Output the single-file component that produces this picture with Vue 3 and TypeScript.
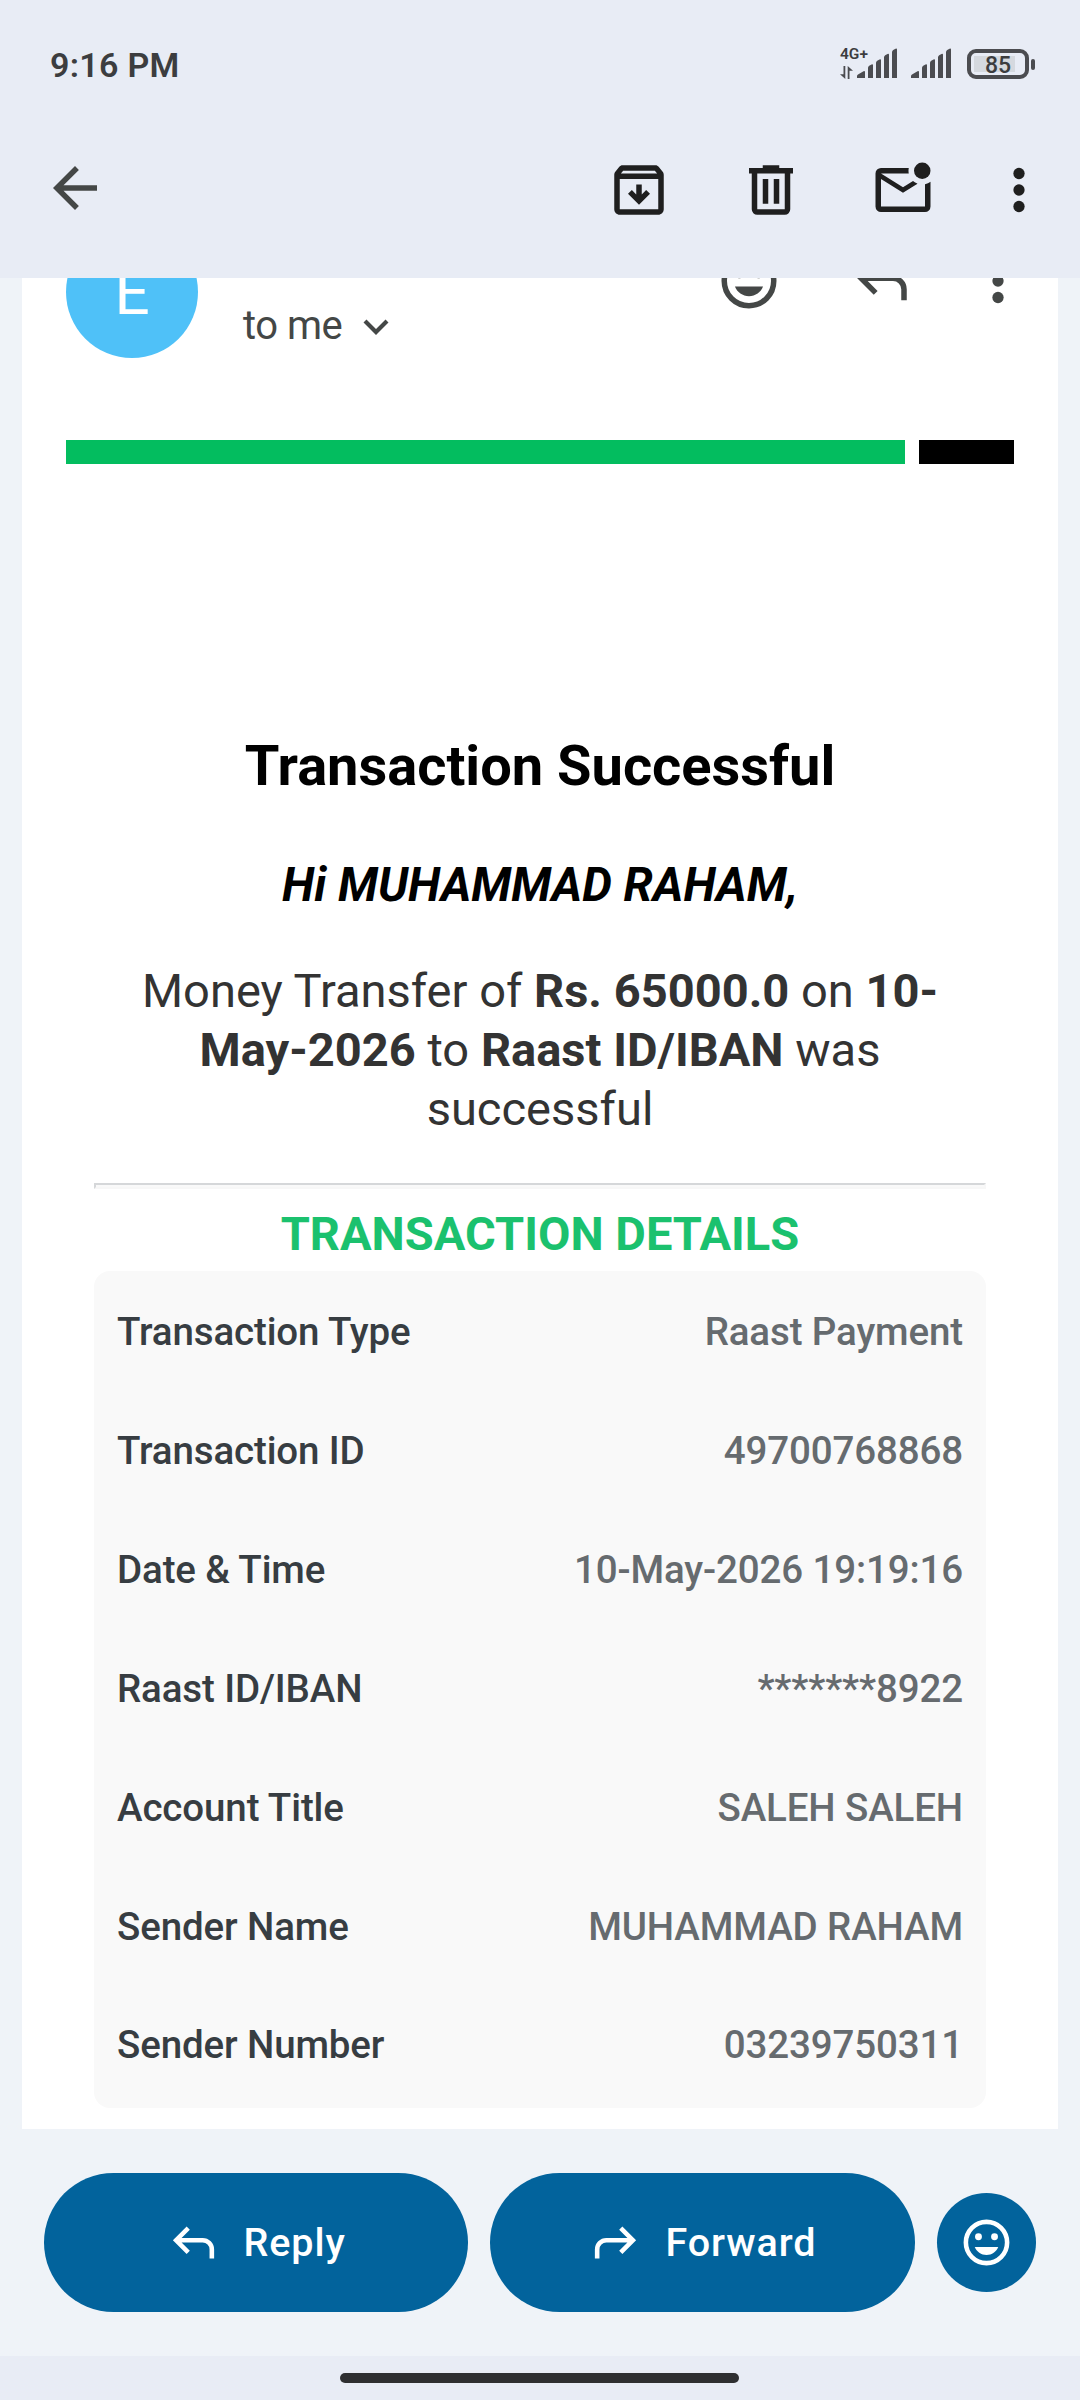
<script setup lang="ts">
interface DetailRow {
  label: string
  value: string
}

const rows: DetailRow[] = [
  { label: 'Transaction Type', value: 'Raast Payment' },
  { label: 'Transaction ID', value: '49700768868' },
  { label: 'Date & Time', value: '10-May-2026 19:19:16' },
  { label: 'Raast ID/IBAN', value: '*******8922' },
  { label: 'Account Title', value: 'SALEH SALEH' },
  { label: 'Sender Name', value: 'MUHAMMAD RAHAM' },
  { label: 'Sender Number', value: '03239750311' },
]

const replyPath =
  'M19 19v-4q0-1.25-.875-2.125T16 12H6.8l3.6 3.6L9 17l-6-6 6-6 1.4 1.4L6.8 10H16q2.075 0 3.538 1.463T21 15v4z'
const signalPath =
  'M0 29v-2q0-1 1-1.6L6.500 22.200Q8 21.500 8 23v6zM11 29V19q0-1.500 1.200-2.200l2.300-1.300q1.500-.7 1.500.8V29zM19 29V14q0-1.500 1.200-2.200l2.300-1.300q1.500-.7 1.500.8V29zM27 29V8.500q0-1.500 1.200-2.200l2.300-1.300q1.500-.7 1.500.8V29zM35 29V3.200q0-1.500 1.200-2.200L38.500-.2Q40-.9 40 .6V29z'
</script>

<template>
  <div class="screen">
    <div class="status">
      <span class="clock">9:16 PM</span>
      <div class="network">
        <span class="gen">4G+</span>
        <svg class="updown" width="13" height="13" viewBox="0 0 13 13">
          <path d="M3.500 0h1.800v13L0 8.200h3.500zM7.700 13V0L13 4.800H9.500V13z" />
        </svg>
      </div>
      <svg class="signal first" width="40" height="30" viewBox="0 -1 40 30"><path :d="signalPath" /></svg>
      <svg class="signal second" width="40" height="30" viewBox="0 -1 40 30"><path :d="signalPath" /></svg>
      <div class="battery"><span>85</span></div>
      <i class="nub"></i>
    </div>

    <div class="toolbar">
      <svg class="icon back" viewBox="0 0 24 24">
        <path d="M20 11H7.830l5.590-5.590L12 4l-8 8 8 8 1.410-1.410L7.830 13H20z" />
      </svg>
      <svg class="icon archive" viewBox="0 0 24 24">
        <path fill-rule="evenodd" d="M20.540 5.230l-1.390-1.680C18.880 3.210 18.470 3 18 3H6c-.47 0-.88.21-1.160.55L3.460 5.230C3.170 5.570 3 6.020 3 6.500V19c0 1.100.9 2 2 2h14c1.100 0 2-.9 2-2V6.500c0-.48-.17-.93-.46-1.270zM6.240 5h11.520l.83 1H5.420zM5 19V8h14v11z" />
        <path d="M13 10v3.600l1.600-1.600L16 13.400l-4 4-4-4L9.400 12l1.600 1.600V10z" />
      </svg>
      <svg class="icon trash" viewBox="0 0 24 24">
        <path fill-rule="evenodd" d="M7 21q-.825 0-1.412-.587T5 19V6H4V4h5V3h6v1h5v2h-1v13q0 .825-.587 1.413T17 21zM17 6H7v13h10zM9 17h2V8H9zm4 0h2V8h-2z" />
      </svg>
      <svg class="icon unread" viewBox="0 0 24 24">
        <path d="M4 20q-.825 0-1.412-.587T2 18V6q0-.825.588-1.412T4 4h10.100q-.1.5-.1 1t.1 1H4l8 5 3.650-2.275q.35.325.763.563t.862.412L12 13 4 8v10h16V9.900q.575-.125 1.075-.35T22 9v9q0 .825-.587 1.413T20 20z" />
        <circle cx="19" cy="5" r="3" />
      </svg>
      <svg class="icon more" viewBox="0 0 24 24">
        <circle cx="12" cy="6" r="2.050" /><circle cx="12" cy="12" r="2.050" /><circle cx="12" cy="18" r="2.050" />
      </svg>
    </div>

    <div class="mail">
      <div class="sender">
        <div class="avatar">E</div>
        <span class="to">to me</span>
        <svg class="chevron" width="26" height="16" viewBox="0 0 26 16">
          <path d="M2 2l11 11L24 2" fill="none" stroke="#444746" stroke-width="4.200" />
        </svg>
        <svg class="icon mood" viewBox="0 0 24 24">
          <circle cx="12" cy="12" r="9" fill="none" stroke="currentColor" stroke-width="2" />
          <circle cx="8.500" cy="9.500" r="1.500" /><circle cx="15.500" cy="9.500" r="1.500" />
          <path d="M12 17.500c2.330 0 4.320-1.450 5.120-3.500H6.880c.8 2.050 2.790 3.500 5.120 3.500z" />
        </svg>
        <svg class="icon answer" viewBox="0 0 24 24"><path :d="replyPath" /></svg>
        <svg class="icon menu" viewBox="0 0 24 24">
          <circle cx="12" cy="6" r="2.050" /><circle cx="12" cy="12" r="2.050" /><circle cx="12" cy="18" r="2.050" />
        </svg>
      </div>

      <div class="stripes"><i class="green"></i><i class="black"></i></div>

      <div class="body">
        <h1>Transaction Successful</h1>
        <h2>Hi MUHAMMAD RAHAM,</h2>
        <p>
          Money Transfer of <b>Rs. 65000.0</b> on <b>10-<br />May-2026</b> to <b>Raast ID/IBAN</b> was<br />successful
        </p>
        <div class="rule"></div>
        <h3>TRANSACTION DETAILS</h3>
        <div class="card">
          <div v-for="row in rows" :key="row.label" class="row">
            <span class="label">{{ row.label }}</span>
            <span class="value">{{ row.value }}</span>
          </div>
        </div>
      </div>
    </div>

    <div class="actions">
      <div class="pill">
        <svg viewBox="0 0 24 24"><path :d="replyPath" /></svg>
        <span>Reply</span>
      </div>
      <div class="pill forward">
        <svg viewBox="0 0 24 24"><path :d="replyPath" transform="matrix(-1 0 0 1 24 0)" /></svg>
        <span>Forward</span>
      </div>
      <div class="react">
        <svg viewBox="0 0 24 24">
          <circle cx="12" cy="12" r="9" fill="none" stroke="currentColor" stroke-width="2" />
          <circle cx="8.500" cy="9.500" r="1.500" /><circle cx="15.500" cy="9.500" r="1.500" />
          <path d="M12 17.500c2.330 0 4.320-1.450 5.120-3.500H6.880c.8 2.050 2.790 3.500 5.120 3.500z" />
        </svg>
      </div>
    </div>

    <div class="nav"><i></i></div>
  </div>
</template>

<style>
body {
  margin: 0;
}
</style>

<style scoped>
.screen {
  width: 1080px;
  height: 2400px;
  display: flex;
  flex-direction: column;
  overflow: hidden;
  background: #eff3f8;
  font-family: Roboto, 'Liberation Sans', sans-serif;
}
svg {
  display: block;
  flex: none;
  fill: currentColor;
}
.status {
  height: 128px;
  flex: none;
  display: flex;
  align-items: flex-start;
  background: #e8ecf5;
  color: #3c3d3f;
}
.clock {
  width: 790px;
  margin: 45px 0 0 50px;
  font-size: 34px;
  line-height: 40px;
  font-weight: 600;
  letter-spacing: 0.3px;
  white-space: nowrap;
}
.network {
  width: 17px;
  margin-top: 45px;
  display: flex;
  flex-direction: column;
}
.gen {
  font-size: 15.500px;
  line-height: 18px;
  font-weight: 600;
  white-space: nowrap;
}
.updown {
  margin: 3px 0 0;
  color: #4b4c50;
}
.signal {
  margin-top: 48px;
  color: #4b4c50;
}
.signal.second {
  margin-left: 14px;
}
.battery {
  width: 54px;
  height: 22px;
  margin: 49px 0 0 16px;
  border: 4px solid #4b4c50;
  border-radius: 9px;
  display: flex;
  align-items: center;
  justify-content: center;
  background: linear-gradient(#d5d9df, #d5d9df) 3px 3px / 41px 16px no-repeat;
}
.battery span {
  font-size: 23px;
  line-height: 22px;
  font-weight: 500;
  padding-top: 3px;
}
.nub {
  width: 4px;
  height: 11px;
  margin: 59px 0 0 2px;
  border-radius: 2px;
  background: #4b4c50;
}
.toolbar {
  height: 150px;
  flex: none;
  display: flex;
  background: #e8ecf5;
  color: #1f1f1f;
}
.icon {
  width: 66px;
  height: 66px;
  margin-top: 29px;
}
.back {
  margin: 27.200px 0 0 42px;
  color: #444746;
}
.archive {
  margin-left: 498.100px;
}
.trash {
  margin-left: 66px;
}
.unread {
  margin-left: 66px;
}
.more {
  margin-left: 49.700px;
}
.mail {
  width: 1036px;
  height: 1851px;
  flex: none;
  margin: 0 auto;
  overflow: hidden;
  background: #fff;
}
.sender {
  height: 132px;
  margin-top: -52px;
  padding-left: 44px;
  display: flex;
  color: #444746;
}
.avatar {
  width: 132px;
  height: 132px;
  border-radius: 50%;
  background: #4fc1f8;
  color: #fff;
  font-size: 62px;
  line-height: 133px;
  text-align: center;
}
.to {
  width: 120px;
  margin: 77px 0 0 45px;
  font-size: 40px;
  line-height: 46px;
  letter-spacing: -0.5px;
  white-space: nowrap;
}
.chevron {
  margin-top: 93px;
}
.mood {
  margin: 22px 0 0 327.400px;
}
.answer {
  margin: 22px 0 0 66.900px;
}
.menu {
  margin: 22px 0 0 49.400px;
}
.stripes {
  height: 24px;
  margin: 82px 44px 0;
  display: flex;
  gap: 14px;
}
.green {
  width: 839px;
  background: #03bd5f;
}
.black {
  width: 95px;
  background: #000;
}
.body {
  padding: 269px 72px 0;
  text-align: center;
}
h1,
h2,
h3,
p {
  margin: 0;
  white-space: nowrap;
}
h1 {
  font-size: 56px;
  line-height: 66px;
  font-weight: 700;
  color: #000;
}
h2 {
  margin-top: 58px;
  font-size: 47.050px;
  line-height: 56px;
  font-weight: 700;
  font-style: italic;
  color: #000;
}
p {
  margin-top: 49px;
  font-size: 47.050px;
  line-height: 58.800px;
  color: #333;
}
b {
  font-weight: 700;
}
.rule {
  height: 2px;
  margin-top: 44.600px;
  border: 2px solid #d5d7d9;
  border-right-color: #f7f7f7;
  border-bottom-color: #f7f7f7;
  background: #f9f9f9;
}
h3 {
  margin-top: 17px;
  font-size: 47.050px;
  line-height: 56px;
  font-weight: 700;
  color: #1bc16e;
}
.card {
  height: 835px;
  margin-top: 9px;
  padding: 2px 23px 0;
  border-radius: 16px;
  background: #f9f9f9;
}
.row {
  height: 118.830px;
  display: flex;
  align-items: center;
  justify-content: space-between;
  font-size: 38.500px;
  line-height: 46px;
  font-weight: 500;
  letter-spacing: -0.130px;
}
.label {
  color: #373d42;
}
.value {
  color: #666b6f;
}
.actions {
  height: 227px;
  flex: none;
  padding: 0 44px;
  display: flex;
  align-items: center;
  gap: 22px;
  color: #fff;
}
.pill {
  width: 424px;
  height: 139px;
  border-radius: 70px;
  display: flex;
  align-items: center;
  background: #02639c;
  font-size: 39.500px;
  line-height: 46px;
  font-weight: 500;
  letter-spacing: 0.900px;
}
.pill.forward {
  width: 425px;
}
.pill svg {
  width: 55px;
  height: 55px;
  margin-left: 122px;
}
.pill.forward svg {
  margin-left: 98px;
}
.pill span {
  margin-left: 22.500px;
  white-space: nowrap;
}
.react {
  width: 99px;
  height: 99px;
  border-radius: 50%;
  display: flex;
  align-items: center;
  justify-content: center;
  background: #02639c;
}
.react svg {
  width: 55px;
  height: 55px;
}
.nav {
  height: 44px;
  flex: none;
  display: flex;
  background: #e8ecf5;
}
.nav i {
  width: 399px;
  height: 10px;
  margin: 17px 0 0 340px;
  border-radius: 5px;
  background: #2e2f31;
}
</style>
